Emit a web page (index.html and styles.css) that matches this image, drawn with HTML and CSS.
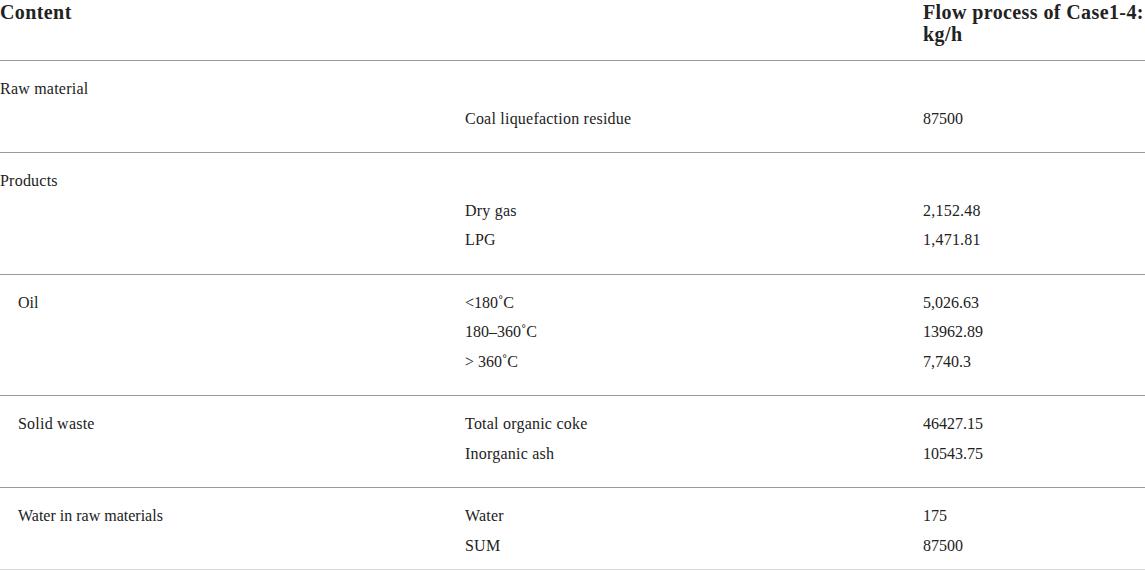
FILE: index.html
```html
<!DOCTYPE html>
<html lang="en">
<head>
<meta charset="utf-8">
<title>Flow process table</title>
<link rel="stylesheet" href="styles.css">
</head>
<body>
<div class="table">
  <div class="head">
    <div class="hcell">Content</div>
    <div class="hcell"></div>
    <div class="hcell">Flow process of Case1-4:<br>kg/h</div>
  </div>

  <div class="group">
    <div class="row"><div class="c1 wide">Raw material</div><div class="c2"></div><div class="c3"></div></div>
    <div class="row"><div class="c1"></div><div class="c2 wide">Coal liquefaction residue</div><div class="c3">87500</div></div>
  </div>

  <div class="group">
    <div class="row"><div class="c1 wide">Products</div><div class="c2"></div><div class="c3"></div></div>
    <div class="row"><div class="c1"></div><div class="c2 wide">Dry gas</div><div class="c3 wide">2,152.48</div></div>
    <div class="row"><div class="c1"></div><div class="c2 wide">LPG</div><div class="c3 wide">1,471.81</div></div>
  </div>

  <div class="group">
    <div class="row"><div class="c1 indent">Oil</div><div class="c2">&lt;180˚C</div><div class="c3">5,026.63</div></div>
    <div class="row"><div class="c1"></div><div class="c2">180–360˚C</div><div class="c3">13962.89</div></div>
    <div class="row"><div class="c1"></div><div class="c2">&gt; 360˚C</div><div class="c3">7,740.3</div></div>
  </div>

  <div class="group">
    <div class="row"><div class="c1 indent wide">Solid waste</div><div class="c2 wide">Total organic coke</div><div class="c3">46427.15</div></div>
    <div class="row"><div class="c1"></div><div class="c2 wide">Inorganic ash</div><div class="c3">10543.75</div></div>
  </div>

  <div class="group last">
    <div class="row"><div class="c1 indent">Water in raw materials</div><div class="c2 wide">Water</div><div class="c3">175</div></div>
    <div class="row"><div class="c1"></div><div class="c2 wide">SUM</div><div class="c3">87500</div></div>
  </div>
</div>
</body>
</html>
```

FILE: styles.css
```css
html, body {
  margin: 0;
  padding: 0;
  background: #ffffff;
}

body {
  font-family: "Liberation Serif", "Times New Roman", serif;
  color: #222222;
  font-size: 16px;
}

.table {
  width: 1145px;
}

.head {
  display: grid;
  grid-template-columns: 465px 458px 1fr;
  padding: 2px 0 16px;
  border-bottom: 1px solid #9a9a9a;
  height: 42px;
}

.hcell {
  font-weight: bold;
  font-size: 20px;
  line-height: 21.5px;
  letter-spacing: 0.4px;
  color: #222222;
}

.group {
  padding: 13px 0 19px;
  border-bottom: 1px solid #9a9a9a;
}

.group.last {
  padding-bottom: 9px;
  border-bottom-color: #d8d8d8;
}

.row {
  display: grid;
  grid-template-columns: 465px 458px 1fr;
  line-height: 29.5px;
  height: 29.5px;
}

.wide {
  letter-spacing: 0.22px;
}

.indent {
  padding-left: 18px;
}
```
